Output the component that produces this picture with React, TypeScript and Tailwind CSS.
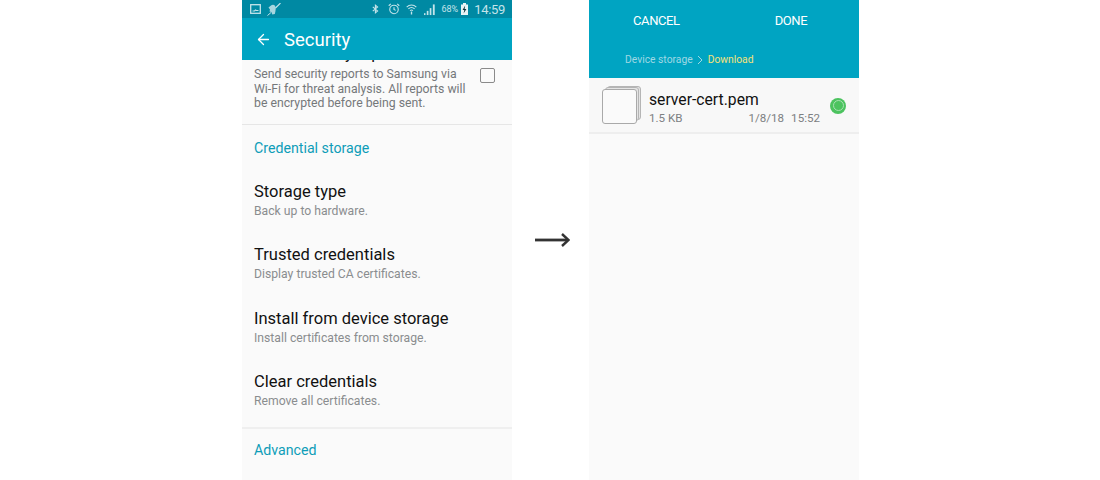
import { ArrowLeft } from "lucide-react";

const rows = [
  { title: "Storage type", sub: "Back up to hardware." },
  { title: "Trusted credentials", sub: "Display trusted CA certificates." },
  { title: "Install from device storage", sub: "Install certificates from storage." },
  { title: "Clear credentials", sub: "Remove all certificates." },
];

function StatusBar() {
  return (
    <div className="relative z-10 flex h-[18px] items-center bg-[#0089a3] pl-[8px] pr-[7px] text-[#c4e4ea]">
      <svg width="11" height="10" viewBox="0 0 11 10" fill="none" stroke="currentColor">
        <rect x="0.7" y="0.7" width="9.6" height="8.6" strokeWidth="1.3" />
        <path d="M2.5 7h2l1-1 .8.5H8.5" strokeWidth="1.2" />
      </svg>
      <svg className="ml-[6px]" width="14" height="13" viewBox="0 0 14 13" fill="currentColor">
        <path d="M4 2.5c1.2-1 3-1 4 .2l.8 2.3-.4 3.6-.6 2.4-2.5.5-1-2.5L2.5 8.6 3 6.5 1.5 4.5z" opacity="0.85" />
        <path d="M8.5 5 13.5 0" stroke="currentColor" strokeWidth="1.1" />
        <path d="M.5 12.5 4 9.5" stroke="currentColor" strokeWidth="1" />
      </svg>
      <div className="ml-auto flex items-center">
        <svg width="7" height="12" viewBox="0 0 9 12" fill="none" stroke="currentColor" strokeWidth="1.4">
          <path d="M1 3.2 7.2 8.6 4.4 11V1l2.8 2.4L1 8.8" />
        </svg>
        <svg className="ml-[9px]" width="12" height="12" viewBox="0 0 13 13" fill="none" stroke="currentColor" strokeWidth="1.2">
          <circle cx="6.5" cy="7" r="4.6" />
          <path d="M6.5 4.5V7l1.8 1M.8 3 3 1M12.2 3 10 1" />
        </svg>
        <svg className="ml-[6px]" width="11" height="12" viewBox="0 0 13 13" fill="none" stroke="currentColor" strokeWidth="1.3">
          <path d="M.8 4.2c3.3-3.2 8.1-3.2 11.4 0M2.8 6.4c2.2-2 5.2-2 7.4 0M4.8 8.5c1-.9 2.4-.9 3.4 0" />
          <path d="M6.5 9.5V13" strokeWidth="1.6" />
        </svg>
        <svg className="ml-[7px]" width="12" height="13" viewBox="0 0 13 13" fill="currentColor">
          <rect x="0" y="10.5" width="1.6" height="2" />
          <rect x="3" y="8" width="1.8" height="4.5" />
          <rect x="6.2" y="5" width="1.8" height="7.5" />
          <rect x="9.6" y="1" width="2" height="11.5" />
        </svg>
        <span className="ml-[5px] text-[9px] leading-none">68%</span>
        <svg className="ml-[3px]" width="7" height="12" viewBox="0 0 7 12">
          <rect x="0" y="1.5" width="7" height="10.5" fill="#e8f3f5" />
          <rect x="2" y="0" width="3" height="2" fill="#e8f3f5" />
          <path d="M4.2 2.5 1.6 7h1.7l-.7 3.6L5.4 6H3.6z" fill="#10343c" />
        </svg>
        <span className="ml-[6px] text-[13px] leading-none tracking-[-0.3px]">14:59</span>
      </div>
    </div>
  );
}

function SecurityScreen() {
  return (
    <div className="flex h-[480px] w-[270px] flex-col overflow-hidden bg-[#fafafa]">
      <StatusBar />
      <div className="relative z-10 flex h-[42px] items-center bg-[#00a4c2] pl-[13px] text-white">
        <ArrowLeft size={17} strokeWidth={1.8} />
        <span className="ml-[12px] mt-[3px] text-[18.5px]">Security</span>
      </div>
      <div className="-mt-[17px]">
        <div className="border-b border-[#e6e6e6] px-3 pb-[13px]">
          <div className="text-[16.5px] leading-[22px] text-[#111]">Send security reports</div>
          <div className="mt-[2px] flex items-start">
            <p className="w-[216px] text-[12.25px] leading-[14.5px] text-[#75787a]">
              Send security reports to Samsung via Wi-Fi for threat analysis. All reports will be encrypted before
              being sent.
            </p>
            <span className="mt-[1px] ml-[10px] h-[15px] w-[15px] rounded-[2px] border-[1.5px] border-[#8a8a8a]" />
          </div>
        </div>
        <div className="flex h-[48px] items-center px-3 text-[14.2px] text-[#0e9db8]">Credential storage</div>
        <div className="border-b-2 border-[#efefef]">
          {rows.map((row) => (
            <div key={row.title} className="h-[63.67px] px-3 pt-[9px]">
              <div className="text-[16.5px] leading-[20px] text-[#111]">{row.title}</div>
              <div className="text-[12.2px] leading-[19px] text-[#8a8d8f]">{row.sub}</div>
            </div>
          ))}
        </div>
        <div className="flex h-[48px] items-center px-3 pb-[4px] text-[14.2px] text-[#0e9db8]">Advanced</div>
      </div>
    </div>
  );
}

function FileScreen() {
  return (
    <div className="flex h-[480px] w-[270px] flex-col bg-[#fafafa]">
      <div className="h-[78px] bg-[#00a4c2]">
        <div className="flex h-[42px] items-center text-[13px] tracking-[-0.4px] text-white">
          <span className="ml-[44px]">CANCEL</span>
          <span className="ml-[95px]">DONE</span>
        </div>
        <div className="mt-[10px] flex h-[16px] items-center pl-[36px] text-[10.3px]">
          <span className="text-[#9fd8e4]">Device storage</span>
          <svg className="mx-[3px]" width="8" height="10" viewBox="0 0 8 10" fill="none" stroke="#9fd8e4">
            <path d="M2 1l4 4-4 4" />
          </svg>
          <span className="ml-[1px] text-[#f4e27a]">Download</span>
        </div>
      </div>
      <div className="flex h-[56px] items-center border-b-2 border-[#eeeeee] bg-[#f8f8f8] pl-[13px] pr-[13px]">
        <div className="relative h-[38px] w-[39px] shrink-0">
          <span className="absolute right-0 top-0 h-[34px] w-[34px] rounded-[3px] border border-[#b5b5b5] bg-[#e4e4e4]" />
          <span className="absolute right-[2px] top-[1px] h-[34px] w-[34px] rounded-[3px] border border-[#b5b5b5] bg-[#e4e4e4]" />
          <span className="absolute bottom-0 left-0 h-[35px] w-[35px] rounded-[3px] border border-[#a9a9a9] bg-[#fafafa]" />
        </div>
        <div className="ml-[8px] mt-[6px] flex-1">
          <div className="text-[15.7px] leading-[20px] text-[#111]">server-cert.pem</div>
          <div className="flex text-[11.6px] leading-[16px] text-[#7d8082]">
            <span>1.5 KB</span>
            <span className="ml-[66px]">1/8/18</span>
            <span className="ml-[7px]">15:52</span>
          </div>
        </div>
        <span className="mt-[1px] flex h-[16px] w-[16px] items-center justify-center rounded-full bg-[#4cc35f]">
          <span className="h-[11px] w-[11px] rounded-full border border-[#a8e0b2] bg-[#4cc35f]" />
        </span>
      </div>
    </div>
  );
}

export default function App() {
  return (
    <div className="flex h-[480px] w-[1100px] items-center overflow-hidden bg-white pl-[242px] font-['Roboto',sans-serif]">
      <SecurityScreen />
      <div className="flex w-[77px] justify-center pl-[3px]">
        <svg width="35" height="16" viewBox="0 0 35 16" fill="none" stroke="#333" strokeWidth="2.8">
          <path d="M0 8h32" />
          <path d="M27 2l6.5 6-6.5 6" strokeWidth="2.4" />
        </svg>
      </div>
      <FileScreen />
    </div>
  );
}
